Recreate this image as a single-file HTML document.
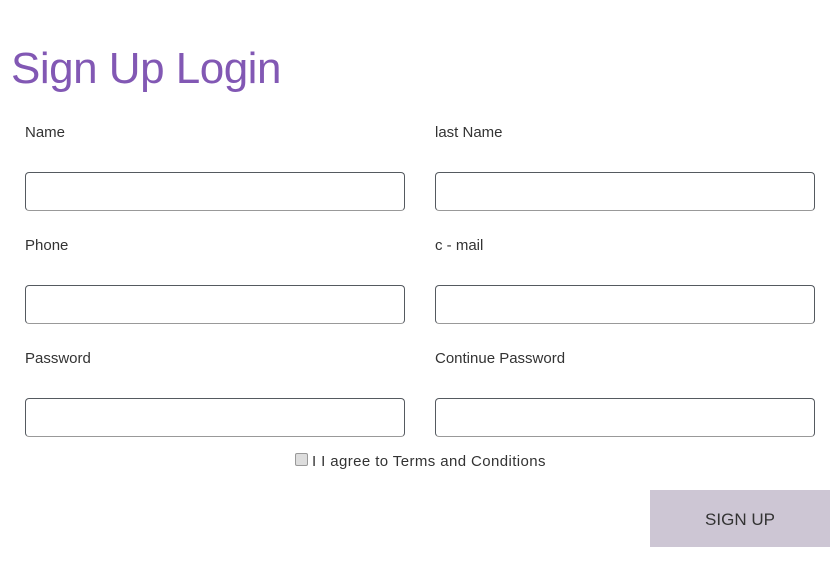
<!DOCTYPE html><html><head><style>
body{margin:0;width:840px;height:573px;background:#fff;font-family:"Liberation Sans",sans-serif;position:relative;overflow:hidden}
.a{position:absolute}
h1{position:absolute;left:11px;top:41px;margin:0;font-size:44px;font-weight:normal;color:#8258b4;line-height:56px;letter-spacing:-0.5px}
.l{position:absolute;font-size:15px;color:#333;line-height:18px}
.i{position:absolute;width:378px;height:37px;border:1px solid #555a60;border-radius:4px;border-bottom-color:#999}
</style></head><body>
<h1>Sign Up Login</h1>
<div class="l" style="left:25px;top:124px">Name</div>
<div class="l" style="left:435px;top:124px">last Name</div>
<div class="i" style="left:25px;top:172px"></div>
<div class="i" style="left:435px;top:172px"></div>
<div class="l" style="left:25px;top:237px">Phone</div>
<div class="l" style="left:435px;top:237px">c - mail</div>
<div class="i" style="left:25px;top:285px"></div>
<div class="i" style="left:435px;top:285px"></div>
<div class="l" style="left:25px;top:350px">Password</div>
<div class="l" style="left:435px;top:350px">Continue Password</div>
<div class="i" style="left:25px;top:398px"></div>
<div class="i" style="left:435px;top:398px"></div>
<div class="a" style="left:295px;top:453px;width:11px;height:11px;border:1px solid #999;border-radius:2px;background:#ddd"></div>
<div class="l" style="left:312px;top:453px;letter-spacing:0.4px">I I agree to Terms and Conditions</div>
<div class="a" style="left:650px;top:490px;width:180px;height:57px;background:#cdc6d4;color:#333;font-size:17px;line-height:60px;text-align:center">SIGN UP</div>
</body></html>
